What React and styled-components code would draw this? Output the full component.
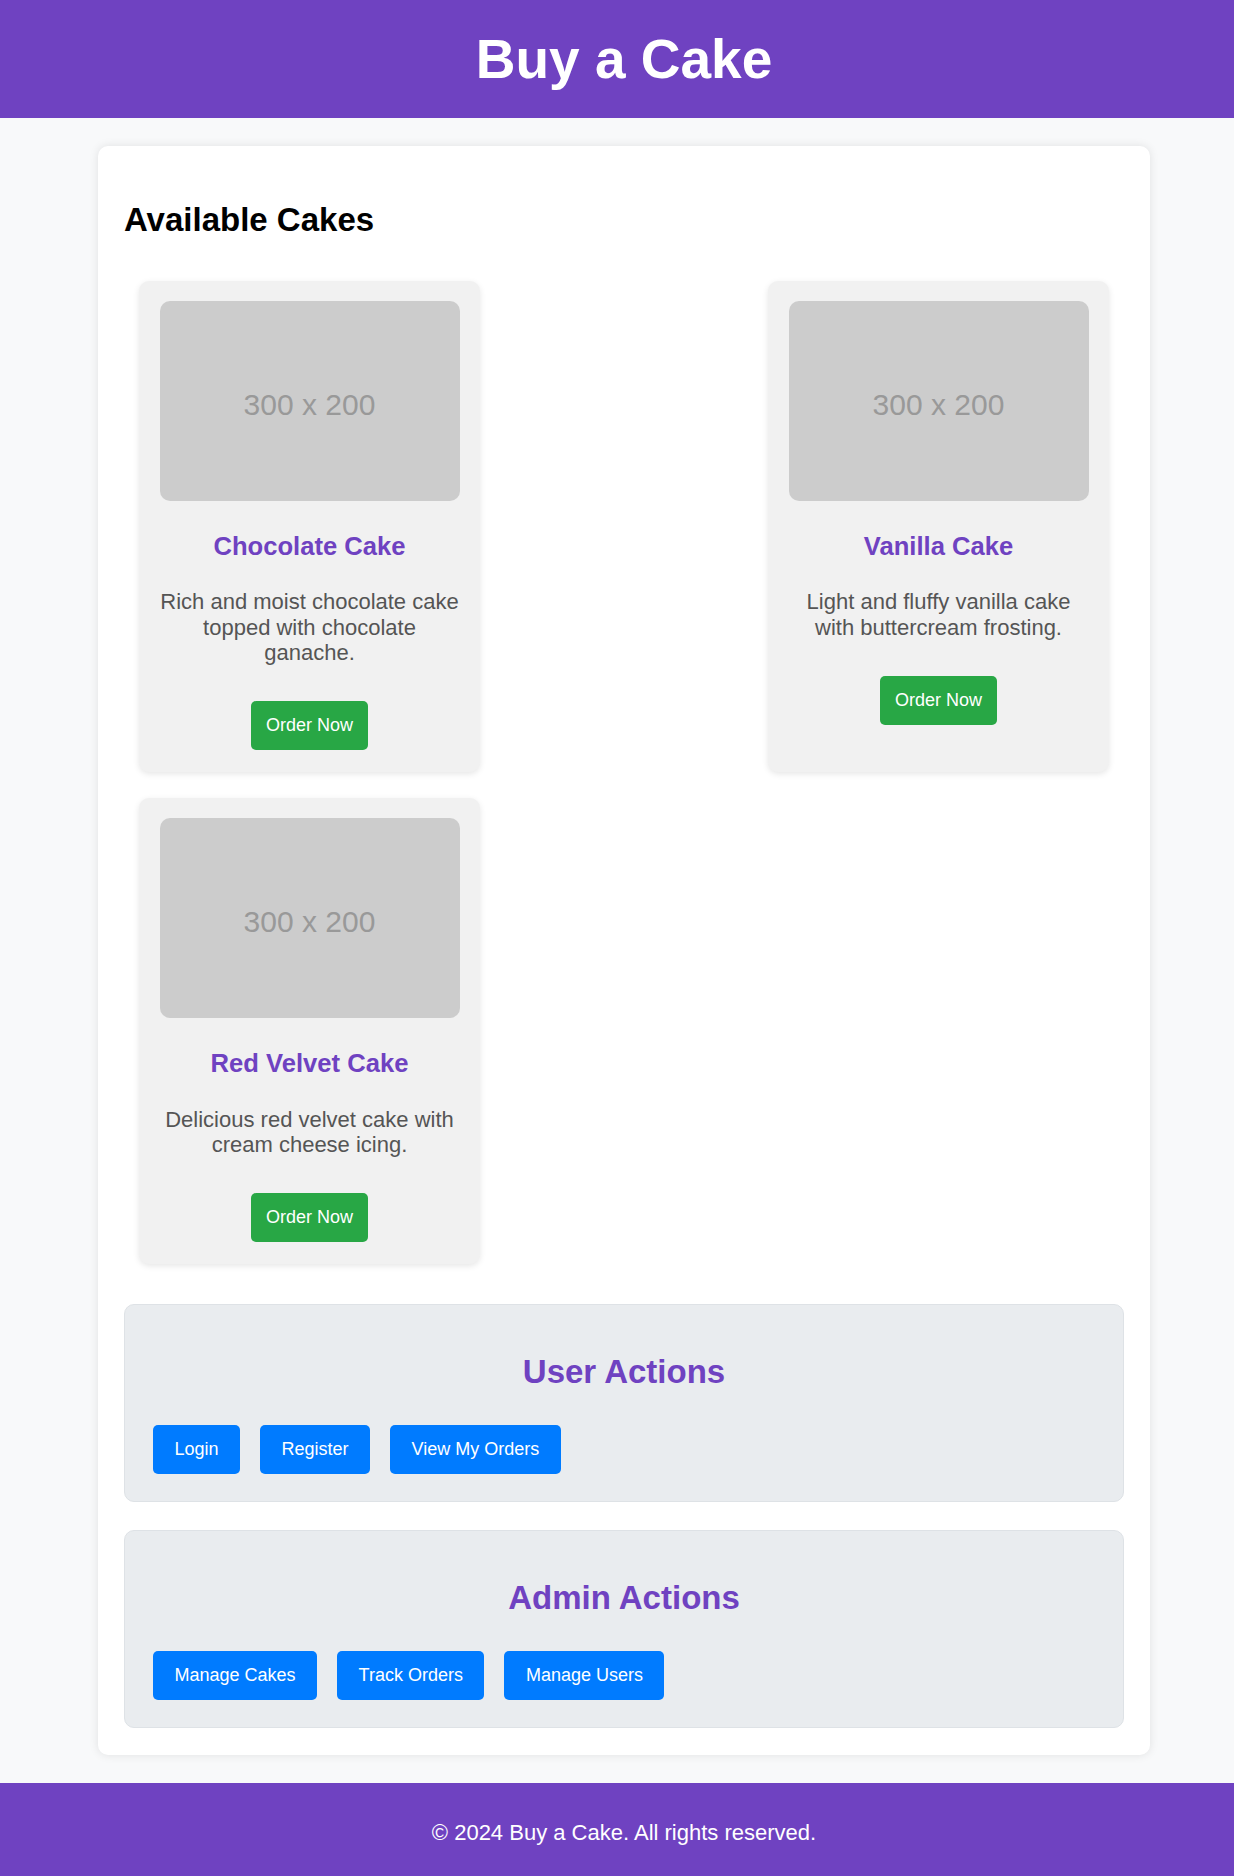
import React from "react";
import styled, { createGlobalStyle } from "styled-components";

const GlobalStyle = createGlobalStyle`
  html, body {
    margin: 0;
    padding: 0;
    background: #f8f9fa;
    font-family: "Liberation Sans", Arial, sans-serif;
  }
  * { box-sizing: border-box; }
`;

const Header = styled.header`
  height: 118px;
  padding-left: 14px;
  background: #6f42c1;
  display: flex;
  align-items: center;
  justify-content: center;
`;

const SiteTitle = styled.h1`
  margin: 0;
  color: #ffffff;
  font-size: 55px;
  font-weight: 700;
  line-height: 63px;
`;

const Main = styled.main`
  width: 1052px;
  margin: 28px 0 0 98px;
  padding: 26px 26px 27px;
  background: #ffffff;
  border-radius: 10px;
  box-shadow: 0 0 10px rgba(0, 0, 0, 0.1);
`;

const SectionTitle = styled.h2`
  margin: 28.5px 0 42.5px;
  font-size: 33px;
  line-height: 38px;
  font-weight: 700;
  color: #000;
`;

const CakeList = styled.div`
  display: flex;
  flex-wrap: wrap;
  justify-content: space-between;
  row-gap: 26px;
  padding: 0 15px;
`;

const Card = styled.article`
  width: 341px;
  padding: 20px 20px 22px;
  background: #f1f1f1;
  border-radius: 10px;
  box-shadow: 0 2px 6px rgba(0, 0, 0, 0.1);
  display: flex;
  flex-direction: column;
  align-items: center;
  text-align: center;
`;

const Placeholder = styled.div`
  width: 300px;
  height: 200px;
  background: #cccccc;
  border-radius: 10px;
  display: flex;
  align-items: center;
  justify-content: center;
  color: #999999;
  font-size: 30px;
  padding-top: 8px;
`;

const CakeName = styled.h3`
  margin: 31px 0 0;
  font-size: 25.6px;
  line-height: 29.4px;
  font-weight: 700;
  color: #6f42c1;
`;

const CakeDesc = styled.p`
  margin: 28px 0 0;
  font-size: 22px;
  line-height: 25.3px;
  color: #555555;
`;

const Button = styled.button`
  height: 49px;
  padding: 0 ${(p) => (p.$wide ? "21.5px" : "15px")};
  border: none;
  border-radius: 5px;
  background: ${(p) => p.$bg};
  color: #ffffff;
  font-family: inherit;
  font-size: 18px;
  cursor: pointer;
`;

const OrderButton = styled(Button)`
  margin-top: 36px;
`;

const ActionsBox = styled.section`
  margin-top: ${(p) => p.$gap}px;
  padding: 48px 27px 27px;
  background: #e9ecef;
  border: 1px solid #dee2e6;
  border-radius: 10px;
`;

const ActionsTitle = styled.h3`
  margin: 0;
  font-size: 33px;
  line-height: 38px;
  font-weight: 700;
  color: #6f42c1;
  text-align: center;
`;

const ButtonRow = styled.div`
  display: flex;
  gap: 20px;
  margin-top: 34px;
  padding-left: 1px;
`;

const Footer = styled.footer`
  margin-top: 28px;
  padding: 37px 0 31px 14px;
  background: #6f42c1;
  color: #ffffff;
  text-align: center;
  font-size: 22px;
  line-height: 25px;
`;

const cakes = [
  {
    name: "Chocolate Cake",
    desc: "Rich and moist chocolate cake topped with chocolate ganache.",
  },
  {
    name: "Vanilla Cake",
    desc: "Light and fluffy vanilla cake with buttercream frosting.",
  },
  {
    name: "Red Velvet Cake",
    desc: "Delicious red velvet cake with cream cheese icing.",
  },
];

const userActions = ["Login", "Register", "View My Orders"];
const adminActions = ["Manage Cakes", "Track Orders", "Manage Users"];

export default function App() {
  return (
    <>
      <GlobalStyle />
      <Header>
        <SiteTitle>Buy a Cake</SiteTitle>
      </Header>
      <Main>
        <SectionTitle>Available Cakes</SectionTitle>
        <CakeList>
          {cakes.map((c) => (
            <Card key={c.name}>
              <Placeholder>300 x 200</Placeholder>
              <CakeName>{c.name}</CakeName>
              <CakeDesc>{c.desc}</CakeDesc>
              <OrderButton $bg="#28a745">Order Now</OrderButton>
            </Card>
          ))}
        </CakeList>
        <ActionsBox $gap={40}>
          <ActionsTitle>User Actions</ActionsTitle>
          <ButtonRow>
            {userActions.map((a) => (
              <Button key={a} $wide $bg="#007bff">
                {a}
              </Button>
            ))}
          </ButtonRow>
        </ActionsBox>
        <ActionsBox $gap={28}>
          <ActionsTitle>Admin Actions</ActionsTitle>
          <ButtonRow>
            {adminActions.map((a) => (
              <Button key={a} $wide $bg="#007bff">
                {a}
              </Button>
            ))}
          </ButtonRow>
        </ActionsBox>
      </Main>
      <Footer>© 2024 Buy a Cake. All rights reserved.</Footer>
    </>
  );
}
